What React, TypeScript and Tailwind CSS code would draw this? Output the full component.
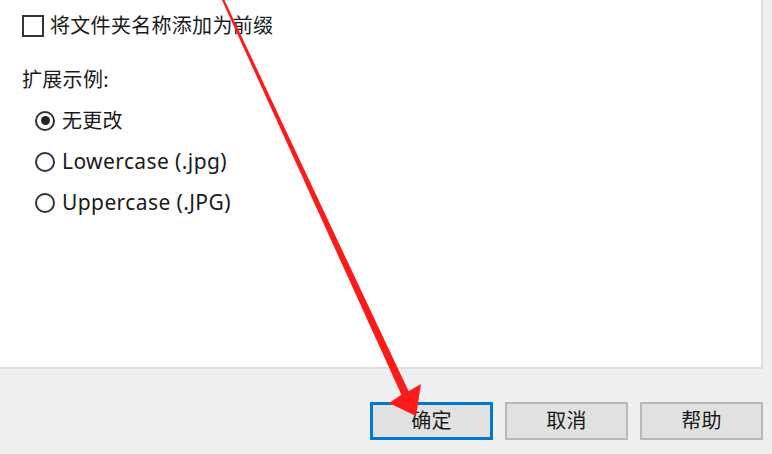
import React from "react"

function Radio({ checked, label }: { checked?: boolean; label: string }) {
  return (
    <div className="flex h-[41px] items-center gap-[7px] pl-[13px]">
      <span className="flex h-[20px] w-[20px] items-center justify-center rounded-full border-2 border-[#333333] bg-white">
        {checked && <span className="h-[9px] w-[9px] rounded-full bg-[#222222]" />}
      </span>
      <span>{label}</span>
    </div>
  )
}

function Button({ label, primary }: { label: string; primary?: boolean }) {
  return (
    <button
      className={
        primary
          ? "h-[38px] w-[123px] border-[3px] border-[#0078d7] bg-[#e1e1e1] text-[20px] text-[#1a1a1a]"
          : "h-[38px] w-[123px] border-2 border-[#b9b9b9] bg-[#e1e1e1] text-[20px] text-[#1a1a1a]"
      }
    >
      {label}
    </button>
  )
}

export default function App() {
  return (
    <div className="relative h-[454px] w-[772px] overflow-hidden bg-[#efefef] font-['Noto_Sans','Noto_Sans_CJK_SC',sans-serif] text-[20px] tracking-[0.3px] text-[#1a1a1a]">

      <div className="h-[369px] w-[763px] border-b-2 border-r-2 border-[#dddddd] bg-white pl-[22px] pt-[6px]">

        <div className="flex h-[40px] items-center gap-[6px]">
          <span className="h-[22px] w-[22px] border-2 border-[#333333] bg-white" />
          <span>将文件夹名称添加为前缀</span>
        </div>

        <div className="mt-[14px] flex h-[40px] items-center">扩展示例:</div>

        <Radio checked label="无更改" />
        <div className="text-[21px] tracking-[0.4px]">
          <Radio label="Lowercase (.jpg)" />
          <Radio label="Uppercase (.JPG)" />
        </div>

      </div>

      <div className="flex justify-end gap-[12px] pr-[9px] pt-[33px]">
        <Button primary label="确定" />
        <Button label="取消" />
        <Button label="帮助" />
      </div>

      {/* annotation arrow */}
      <svg className="pointer-events-none absolute left-0 top-0" width="772" height="454" viewBox="0 0 772 454">
        <polygon
          fill="#ff1a1a"
          points="221,-2 223.5,-2 408.6,391.3 421,384 416,416 389,403 401.4,394.7"
        />
      </svg>
    </div>
  )
}
